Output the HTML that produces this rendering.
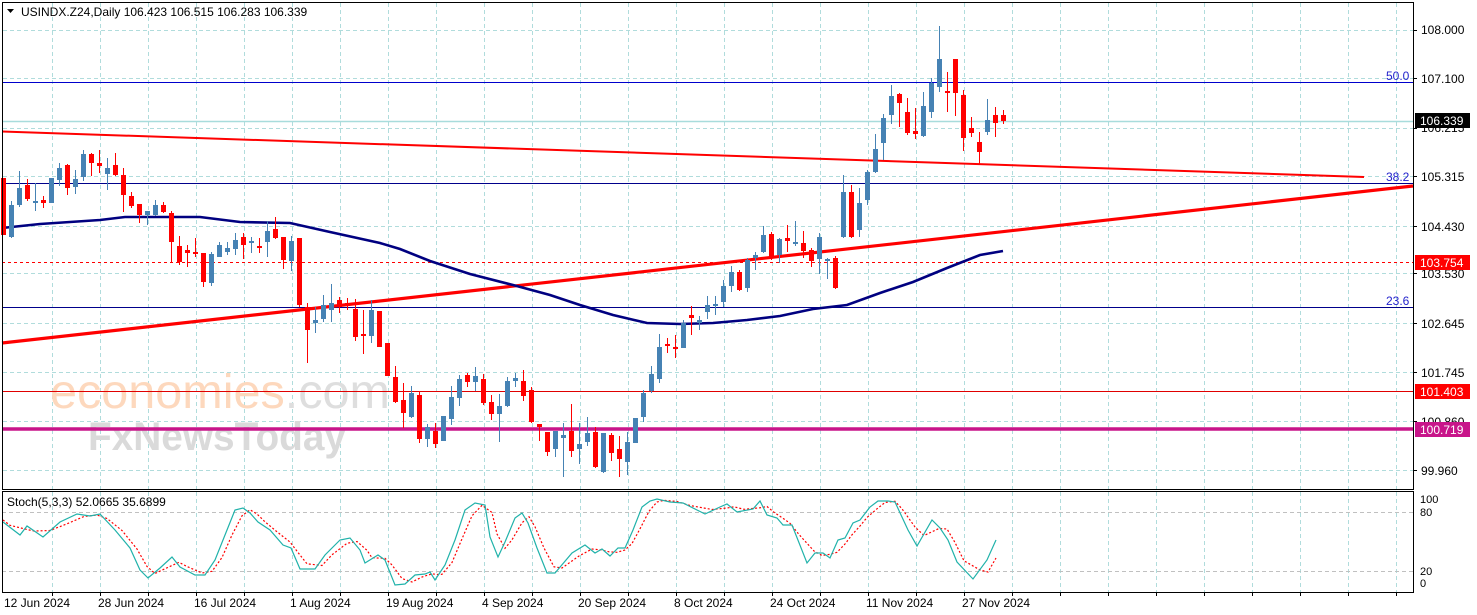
<!DOCTYPE html>
<html><head><meta charset="utf-8"><style>
html,body{margin:0;padding:0;background:#fff;width:1477px;height:615px;overflow:hidden}
svg{display:block;font-family:"Liberation Sans","DejaVu Sans",sans-serif}
</style></head><body>
<svg id="s" width="1477" height="615" viewBox="0 0 1477 615" xmlns="http://www.w3.org/2000/svg">
<rect width="1477" height="615" fill="#fff"/>
<g id="grid"></g>
<!-- watermark -->
<text x="50" y="408" font-size="48" fill="#fdd8bd" textLength="340" lengthAdjust="spacingAndGlyphs">economies<tspan fill="#dedede">.com</tspan></text>
<text x="88" y="450" font-size="40" font-weight="bold" fill="#dadada" textLength="258" lengthAdjust="spacingAndGlyphs">FxNewsToday</text>
<!-- horizontal levels -->
<line x1="2" y1="82.5" x2="1413" y2="82.5" stroke="#0000cc" stroke-width="1"/>
<line x1="2" y1="121.5" x2="1413" y2="121.5" stroke="#a8dcdc" stroke-width="1.5"/>
<line x1="2" y1="183.5" x2="1413" y2="183.5" stroke="#00008b" stroke-width="1"/>
<line x1="2" y1="262.5" x2="1413" y2="262.5" stroke="#ff0000" stroke-width="1" stroke-dasharray="3,3"/>
<line x1="2" y1="307.5" x2="1413" y2="307.5" stroke="#00008b" stroke-width="1"/>
<line x1="2" y1="391.5" x2="1413" y2="391.5" stroke="#e00000" stroke-width="1"/>
<line x1="2" y1="429" x2="1413" y2="429" stroke="#c8158a" stroke-width="3.5"/>
<text x="1386" y="80" font-size="12" fill="#2222cc">50.0</text>
<text x="1386" y="181" font-size="12" fill="#2222cc">38.2</text>
<text x="1386" y="305" font-size="12" fill="#2222cc">23.6</text>
<!-- trend lines -->
<line x1="2" y1="131.5" x2="1364" y2="177" stroke="#ff0000" stroke-width="2"/>
<line x1="2" y1="343" x2="1413" y2="186" stroke="#ff0000" stroke-width="3.2"/>
<polyline fill="none" stroke="#000080" stroke-width="2.6" points="2,228 40,224 100,220 125,217 170,217 200,217 240,222 290,223 330,232 380,243 400,249 430,261 470,274 513,285 550,295 580,305 613,315 647,323 680,324 713,323 747,320 780,316 813,309 847,305 880,293 913,282 947,268 980,255 1003,251"/>
<g id="candles"></g>
<!-- stoch -->
<line x1="2" y1="512.5" x2="1413" y2="512.5" stroke="#c0c0c0" stroke-dasharray="4,3"/>
<line x1="2" y1="571.5" x2="1413" y2="571.5" stroke="#c0c0c0" stroke-dasharray="4,3"/>
<polyline id="sig" fill="none" stroke="#ff0000" stroke-width="1.2" stroke-dasharray="2,2"/>
<polyline id="main" fill="none" stroke="#20b2aa" stroke-width="1.2"/>
<text x="7" y="506" font-size="12" fill="#000">Stoch(5,3,3) 52.0665 35.6899</text>
<!-- frames -->
<rect x="2.5" y="2.5" width="1411" height="487" fill="none" stroke="#000" stroke-width="1"/>
<rect x="2.5" y="491.5" width="1411" height="101" fill="none" stroke="#000" stroke-width="1"/>
<!-- title -->
<path d="M7,9 L14,9 L10.5,13 Z" fill="#000"/>
<text x="21" y="16" font-size="12" fill="#000">USINDX.Z24,Daily  106.423 106.515 106.283 106.339</text>
<!-- price axis -->
<g font-size="12" fill="#000" id="axis">
<text x="1421" y="34">108.000</text>
<text x="1421" y="83">107.100</text>
<text x="1421" y="132">106.215</text>
<text x="1421" y="181">105.315</text>
<text x="1421" y="231">104.430</text>
<text x="1421" y="278">103.530</text>
<text x="1421" y="328">102.645</text>
<text x="1421" y="377">101.745</text>
<text x="1421" y="426">100.860</text>
<text x="1421" y="475">99.960</text>
</g>
<rect x="1415" y="113" width="55" height="15" fill="#000"/>
<text x="1420" y="125" font-size="12" fill="#fff">106.339</text>
<rect x="1415" y="255" width="55" height="15" fill="#ff0000"/>
<text x="1420" y="267" font-size="12" fill="#fff">103.754</text>
<rect x="1415" y="384" width="55" height="15" fill="#ff0000"/>
<text x="1420" y="396" font-size="12" fill="#fff">101.403</text>
<rect x="1415" y="422" width="55" height="15" fill="#c8158a"/>
<text x="1420" y="434" font-size="12" fill="#fff">100.719</text>
<g font-size="11" fill="#000">
<text x="1420" y="503">100</text><text x="1420" y="516">80</text>
<text x="1420" y="575">20</text><text x="1420" y="587">0</text>
</g>
<g font-size="12" fill="#000">
<text x="4" y="607">12 Jun 2024</text>
<text x="98" y="607">28 Jun 2024</text>
<text x="194" y="607">16 Jul 2024</text>
<text x="290" y="607">1 Aug 2024</text>
<text x="386" y="607">19 Aug 2024</text>
<text x="482" y="607">4 Sep 2024</text>
<text x="578" y="607">20 Sep 2024</text>
<text x="674" y="607">8 Oct 2024</text>
<text x="770" y="607">24 Oct 2024</text>
<text x="866" y="607">11 Nov 2024</text>
<text x="962" y="607">27 Nov 2024</text>
</g>
<g id="ticks"></g>
</svg>
<script>
var NS="http://www.w3.org/2000/svg";
function el(t,a,p){var e=document.createElementNS(NS,t);for(var k in a)e.setAttribute(k,a[k]);document.getElementById(p).appendChild(e);return e;}
var ys=[30,78,128,176,226,273,323,372,421,470];
ys.forEach(function(y){el("line",{x1:3,y1:y+.5,x2:1413,y2:y+.5,stroke:"#b0dcdc","stroke-dasharray":"4,3"},"grid");
 el("line",{x1:1413,y1:y+.5,x2:1417,y2:y+.5,stroke:"#000"},"ticks");});
for(var k=0;k<29;k++){var x=Math.round(51.7+48*k)+.5;
 el("line",{x1:x,y1:3,x2:x,y2:489,stroke:"#b0dcdc","stroke-dasharray":"4,3"},"grid");
 el("line",{x1:x,y1:492,x2:x,y2:592,stroke:"#b0dcdc","stroke-dasharray":"4,3"},"grid");
 el("line",{x1:x,y1:592,x2:x,y2:596,stroke:"#000"},"ticks");}
var C=[[178,235,178,235],[237,205,201,238],[205,188,171,207],[185,199,179,201],[202,201,183,211],[200,203,196,208],[203,178,178,203],[180,168,163,186],[165,188,164,195],[187,179,170,194],[177,154,150,181],[154,163,153,176],[163,166,150,173],[174,168,158,190],[165,175,153,176],[175,195,168,212],[196,206,192,208],[204,215,204,223],[215,211,211,225],[215,205,200,216],[205,212,202,213],[213,242,211,263],[246,262,236,265],[250,253,245,267],[252,253,238,257],[253,282,253,287],[283,254,252,286],[257,245,242,257],[252,248,242,255],[249,240,233,255],[237,245,233,259],[243,241,237,253],[246,247,238,253],[242,231,221,257],[229,238,217,239],[237,260,237,269],[261,241,236,271],[238,305,238,307],[307,330,303,363],[323,320,307,333],[319,305,295,322],[310,303,284,322],[300,307,297,313],[303,306,298,310],[309,337,299,341],[334,335,310,354],[336,310,300,343],[311,347,311,347],[343,376,343,376],[377,402,366,403],[400,413,383,428],[417,393,386,418],[395,439,391,443],[439,427,424,447],[431,444,423,448],[441,416,416,441],[419,397,386,425],[398,379,375,406],[375,382,373,387],[382,376,367,391],[379,403,374,405],[402,414,395,420],[414,406,394,442],[406,381,377,407],[381,378,373,387],[381,396,370,401],[390,422,387,423],[424,427,424,441],[432,452,432,456],[449,431,431,457],[438,435,423,477],[431,451,404,457],[449,444,423,464],[442,433,417,446],[432,467,427,468],[472,433,433,473],[435,453,433,461],[449,459,436,477],[462,442,432,475],[443,418,418,443],[417,393,390,422],[391,374,366,393],[379,347,334,383],[344,345,338,353],[347,348,335,358],[348,323,320,348],[315,318,306,335],[323,320,316,330],[312,305,296,319],[306,304,296,315],[302,286,280,307],[286,272,266,292],[272,290,270,291],[288,260,258,292],[258,255,252,270],[252,235,226,253],[234,258,232,260],[255,239,238,263],[238,241,225,252],[243,242,221,246],[243,251,231,258],[250,261,248,267],[259,237,233,274],[261,259,258,279],[258,288,256,289],[237,192,175,238],[192,237,185,238],[230,203,188,237],[200,172,170,205],[172,149,134,173],[143,118,114,160],[115,96,85,124],[94,103,93,127],[112,133,98,135],[131,134,108,139],[136,106,92,137],[112,83,78,118],[87,59,26,92],[91,92,72,112],[59,93,59,116],[95,138,90,151],[128,133,117,137],[142,152,132,165],[132,120,99,135],[115,123,107,137],[115,121,110,124]];
C.forEach(function(c,i){var x=Math.round(3.3+8*i);var red=c[1]>=c[0];var col=red?"#ff0000":"#4682b4";
 el("line",{x1:x+.5,y1:c[2],x2:x+.5,y2:c[3],stroke:col,"stroke-width":1},"candles");
 var t=Math.min(c[0],c[1]),b=Math.max(c[0],c[1]);if(b-t<2)b=t+2;
 el("rect",{x:x-2,y:t,width:5,height:b-t,fill:col},"candles");});
var M=[[3,522],[20,535],[27,526],[43,537],[60,522],[77,514],[90,516],[100,514],[115,530],[130,548],[140,570],[148,578],[160,568],[172,557],[180,567],[195,575],[205,575],[215,560],[225,535],[235,510],[243,508],[250,513],[258,522],[270,530],[283,545],[291,548],[300,569],[315,569],[325,555],[340,540],[350,538],[360,550],[365,563],[378,555],[385,560],[395,585],[405,584],[415,575],[425,574],[430,572],[435,580],[445,565],[455,540],[465,510],[475,503],[485,505],[490,537],[498,557],[505,542],[515,518],[522,513],[528,523],[537,548],[547,573],[555,573],[572,553],[585,545],[595,553],[602,549],[610,556],[618,548],[625,548],[633,530],[642,507],[650,501],[657,499],[670,502],[683,503],[705,514],[720,507],[727,504],[737,512],[753,509],[760,501],[767,515],[777,518],[783,525],[792,525],[807,563],[815,553],[823,553],[830,558],[838,540],[845,538],[853,523],[860,520],[870,507],[878,501],[888,501],[895,502],[908,530],[917,546],[932,520],[940,528],[948,540],[957,562],[973,579],[987,560],[996,540]];
document.getElementById("main").setAttribute("points",M.map(function(p){return p[0]+","+p[1]}).join(" "));
var S=[];for(var i=0;i<M.length;i++){var a=M[Math.max(0,i-1)][1],b=M[i][1],c=M[Math.min(M.length-1,i+1)][1];
 var y=(a+b*2+c)/4;S.push((M[i][0]+7)+","+y.toFixed(1));}
S[S.length-1]="996,558";S.splice(S.length-2,1,"988,572");
document.getElementById("sig").setAttribute("points","3,520 "+S.join(" "));
</script>
</body></html>
